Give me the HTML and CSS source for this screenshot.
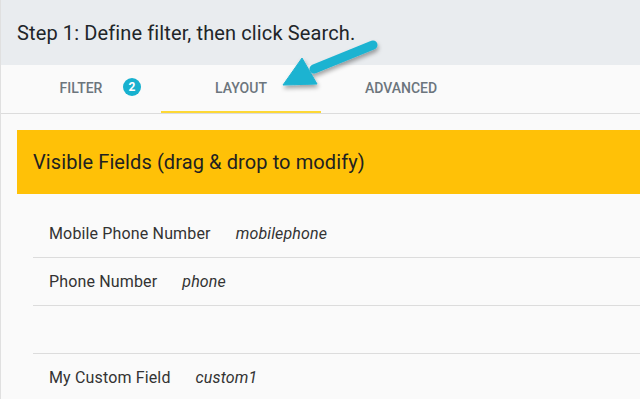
FILE: index.html
```html
<!DOCTYPE html>
<html>
<head>
<meta charset="utf-8">
<link rel="stylesheet" href="styles.css">
</head>
<body>
<div class="page">
  <header class="header">Step 1: Define filter, then click Search.</header>
  <nav class="tabs">
    <div class="tab">Filter<span class="badge">2</span></div>
    <div class="tab active">Layout</div>
    <div class="tab">Advanced</div>
  </nav>
  <main class="content">
    <div class="panel-title">Visible Fields (drag &amp; drop to modify)</div>
    <ul class="fields">
      <li class="field"><span class="label">Mobile Phone Number</span><span class="key">mobilephone</span></li>
      <li class="field"><span class="label">Phone Number</span><span class="key">phone</span></li>
      <li class="field"></li>
      <li class="field"><span class="label">My Custom Field</span><span class="key">custom1</span></li>
    </ul>
  </main>
  <svg class="arrow" width="120" height="80" viewBox="0 0 120 80">
    <defs>
      <filter id="sh" x="-30%" y="-30%" width="160%" height="160%">
        <feDropShadow dx="1" dy="3" stdDeviation="2" flood-color="#000" flood-opacity="0.35"/>
      </filter>
    </defs>
    <g filter="url(#sh)" fill="#1cb3d1" stroke="#1cb3d1">
      <line x1="92" y1="15" x2="33" y2="39" stroke-width="9" stroke-linecap="round"/>
      <polygon points="2,55 21,28 36,54" stroke-width="1" stroke-linejoin="round"/>
    </g>
  </svg>
</div>
</body>
</html>
```
FILE: styles.css
```css
html, body {
  margin: 0;
  padding: 0;
  background: #fafafa;
}
body {
  font-family: Roboto, "Liberation Sans", sans-serif;
  color: #212121;
  overflow: hidden;
}
.page {
  position: relative;
  border-left: 1px solid #e0e0e0;
  min-height: 399px;
}
.header {
  height: 65px;
  background: #e9ecef;
  display: flex;
  align-items: center;
  padding-left: 16px;
  font-size: 20px;
  letter-spacing: 0.12px;
  color: #212529;
  box-sizing: border-box;
}
.tabs {
  display: flex;
  border-bottom: 1px solid #dcdcdc;
  background: #fafafa;
}
.tab {
  position: relative;
  width: 160px;
  height: 48px;
  box-sizing: border-box;
  padding-bottom: 2px;
  display: flex;
  align-items: center;
  justify-content: center;
  font-size: 14px;
  font-weight: 500;
  text-transform: uppercase;
  color: #6c757d;
}
.tab.active::after {
  content: "";
  position: absolute;
  left: 0;
  right: 0;
  bottom: 0;
  height: 2px;
  background: #fdd835;
}
.badge {
  position: absolute;
  left: 122px;
  top: 13px;
  width: 18px;
  height: 18px;
  border-radius: 50%;
  background: #17b1cf;
  color: #fff;
  font-size: 12px;
  font-weight: 700;
  display: flex;
  align-items: center;
  justify-content: center;
}
.content {
  padding: 16px 0 0 16px;
}
.panel-title {
  height: 64px;
  background: #ffc107;
  display: flex;
  align-items: center;
  padding-left: 16px;
  font-size: 20px;
  letter-spacing: 0.1px;
  color: #212121;
}
.fields {
  list-style: none;
  margin: 0 0 0 16px;
  padding: 16px 0 0 0;
}
.field {
  height: 47px;
  border-bottom: 1px solid #dcdcdc;
  display: flex;
  align-items: center;
  padding-left: 16px;
  font-size: 16px;
  letter-spacing: 0.15px;
  color: #333;
}
.field:last-child {
  border-bottom: none;
}
.label {
  margin-right: 25px;
}
.key {
  font-style: italic;
}
.arrow {
  position: absolute;
  left: 280px;
  top: 30px;
}
```
